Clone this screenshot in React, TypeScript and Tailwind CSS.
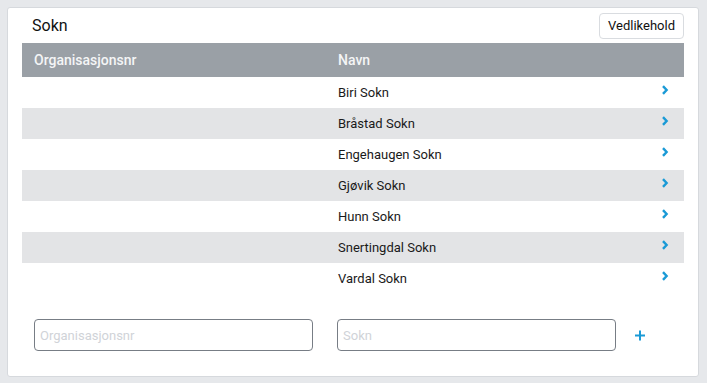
const rows = [
  { org: '', name: 'Biri Sokn' },
  { org: '', name: 'Bråstad Sokn' },
  { org: '', name: 'Engehaugen Sokn' },
  { org: '', name: 'Gjøvik Sokn' },
  { org: '', name: 'Hunn Sokn' },
  { org: '', name: 'Snertingdal Sokn' },
  { org: '', name: 'Vardal Sokn' },
];

function Chevron() {
  return (
    <svg width="8" height="10" viewBox="0 0 8 10" className="block">
      <path d="M2 1.2 L5.6 5 L2 8.8" fill="none" stroke="#1a9ad6" strokeWidth="2.4" />
    </svg>
  );
}

export default function App() {
  return (
    <div className="min-h-[383px] w-[707px] bg-[#e6e8eb] p-[7px] font-['Roboto',sans-serif]">
      <div className="w-[692px] h-[370px] bg-white rounded-[3px] border border-[#d6d9dd] px-[14px] flex flex-col">
        {/* Header */}
        <div className="flex items-center justify-between h-[35px] pt-[1px]">
          <div className="pl-[10px] text-[16px] text-[#111] leading-none">Sokn</div>
          <button className="h-[26px] px-[8px] rounded-[4px] border border-[#d9dce0] bg-white text-[13px] text-[#111]">
            Vedlikehold
          </button>
        </div>

        {/* Table */}
        <div className="flex flex-col">
          <div className="grid grid-cols-[304px_1fr_40px] h-[34px] items-center bg-[#9aa0a6] text-[#f4f5f6] text-[14px] font-medium">
            <div className="pl-[12px]">Organisasjonsnr</div>
            <div className="pl-[12px]">Navn</div>
            <div />
          </div>
          {rows.map((r, i) => (
            <div
              key={r.name}
              className={`grid grid-cols-[304px_1fr_40px] h-[31px] items-center text-[13px] text-[#1a1a1a] ${
                i % 2 === 1 ? 'bg-[#e3e4e6]' : 'bg-white'
              }`}
            >
              <div className="pl-[12px]">{r.org}</div>
              <div className="pl-[12px]">{r.name}</div>
              <div className="flex justify-end pr-[15px] -mt-[5px]">
                <Chevron />
              </div>
            </div>
          ))}
        </div>

        {/* Add row */}
        <div className="flex items-center mt-[25px] pl-[12px]">
          <input
            placeholder="Organisasjonsnr"
            className="w-[279px] h-[32px] rounded-[4px] border border-[#777d85] px-[5px] text-[13px] placeholder:text-[#d0d3d8] outline-none"
          />
          <input
            placeholder="Sokn"
            className="ml-[24px] w-[279px] h-[32px] rounded-[4px] border border-[#777d85] px-[5px] text-[13px] placeholder:text-[#d0d3d8] outline-none"
          />
          <button className="ml-[19px] w-[10px] h-[10px] flex items-center justify-center">
            <svg width="11" height="11" viewBox="0 0 11 11">
              <path d="M5.5 0 V11 M0 5.5 H11" stroke="#1a9ad6" strokeWidth="2.2" />
            </svg>
          </button>
        </div>
      </div>
    </div>
  );
}
